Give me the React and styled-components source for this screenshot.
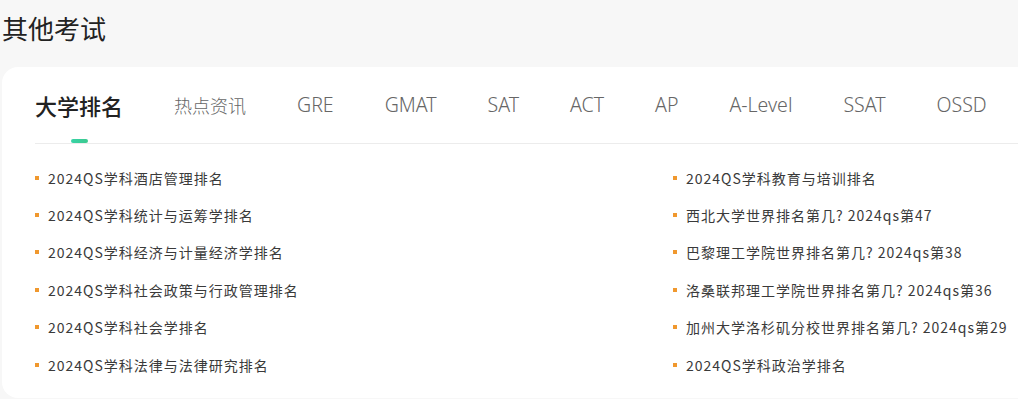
import React from 'react';
import styled, { createGlobalStyle } from 'styled-components';

const GlobalStyle = createGlobalStyle`
  html, body {
    margin: 0;
    padding: 0;
    background: #f7f7f7;
    overflow: hidden;
    font-family: "Noto Sans CJK SC", "Noto Sans", sans-serif;
  }
`;

const tabs = ['大学排名', '热点资讯', 'GRE', 'GMAT', 'SAT', 'ACT', 'AP', 'A-Level', 'SSAT', 'OSSD'];

const leftItems = [
    '2024QS学科酒店管理排名',
    '2024QS学科统计与运筹学排名',
    '2024QS学科经济与计量经济学排名',
    '2024QS学科社会政策与行政管理排名',
    '2024QS学科社会学排名',
    '2024QS学科法律与法律研究排名',
];

const rightItems = [
    '2024QS学科教育与培训排名',
    '西北大学世界排名第几? 2024qs第47',
    '巴黎理工学院世界排名第几? 2024qs第38',
    '洛桑联邦理工学院世界排名第几? 2024qs第36',
    '加州大学洛杉矶分校世界排名第几? 2024qs第29',
    '2024QS学科政治学排名',
];

// latin tab labels render a bit larger than the CJK ones in the original
const isLatin = (s) => /^[A-Za-z-]+$/.test(s);

const App = () => {
    return (
        <Page>
            <GlobalStyle />
            <Title>其他考试</Title>
            <Card>
                <TabBar>
                    {tabs.map((t, i) => (
                        <Tab key={t} active={i === 0} latin={isLatin(t)}>
                            {t}
                        </Tab>
                    ))}
                </TabBar>
                <List>
                    <Column>
                        {leftItems.map((item) => (
                            <Item key={item}>{item}</Item>
                        ))}
                    </Column>
                    <Column>
                        {rightItems.map((item) => (
                            <Item key={item}>{item}</Item>
                        ))}
                    </Column>
                </List>
            </Card>
        </Page>
    );
};

const Page = styled.div`
    width: 1018px;
    height: 399px;
    overflow: hidden;
    padding-left: 2px;
    box-sizing: border-box;
`;

const Title = styled.h2`
    margin: 0;
    padding-top: 11px;
    height: 67px;
    box-sizing: border-box;
    font-size: 26px;
    line-height: 34px;
    font-weight: 400;
    color: #222;
`;

const Card = styled.div`
    width: 1360px;
    height: 331px;
    background: #fff;
    border-radius: 16px;
    padding: 0 33px;
    box-sizing: border-box;
`;

const TabBar = styled.div`
    display: flex;
    align-items: center;
    gap: 51px;
    height: 77px;
    border-bottom: 1px solid #ececec;
    box-sizing: border-box;
`;

const Tab = styled.div`
    position: relative;
    height: 100%;
    display: flex;
    align-items: center;
    padding-bottom: 1px;
    box-sizing: border-box;
    font-family: ${(p) => (p.active ? '"Noto Sans CJK SC"' : '"Noto Sans", "Noto Sans CJK SC"')}, sans-serif;
    font-size: ${(p) => (p.active ? '22px' : p.latin ? '19.5px' : '18px')};
    font-weight: ${(p) => (p.active ? 500 : 300)};
    color: ${(p) => (p.active ? '#222' : '#666')};
    white-space: nowrap;

    &::after {
        content: '';
        display: ${(p) => (p.active ? 'block' : 'none')};
        position: absolute;
        left: 50%;
        bottom: 0;
        width: 17px;
        height: 4px;
        margin-left: -8px;
        border-radius: 2px;
        background: linear-gradient(90deg, #38d3a6, #3cc98f);
    }
`;

const List = styled.div`
    display: grid;
    grid-template-columns: 638px 638px;
    padding-top: 15px;
`;

const Column = styled.div`
    display: flex;
    flex-direction: column;
`;

const Item = styled.div`
    display: flex;
    align-items: center;
    gap: 9px;
    height: 37.4px;
    font-size: 14px;
    letter-spacing: 1px;
    color: #3a3a3a;
    white-space: nowrap;

    &::before {
        content: '';
        width: 4px;
        height: 4px;
        background: #f0982e;
        flex-shrink: 0;
    }
`;

export default App;
